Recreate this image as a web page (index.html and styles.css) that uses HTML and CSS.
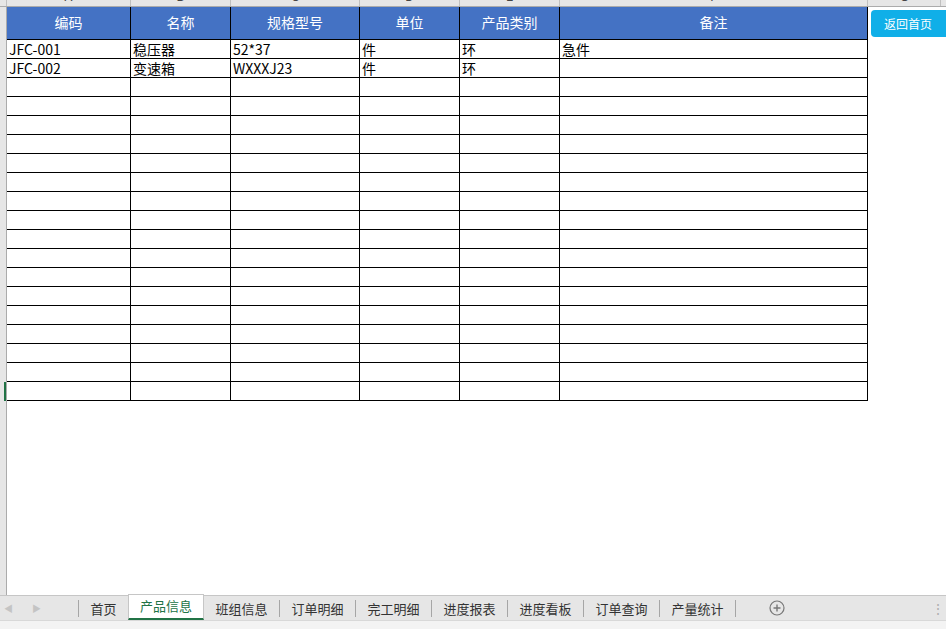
FILE: index.html
```html
<!DOCTYPE html>
<html lang="zh-CN">
<head>
    <meta charset="UTF-8">
    <title>产品信息</title>
    <link rel="stylesheet" href="styles.css">
</head>
<body>
    <div class="app">
        <!-- column letters, mostly scrolled out of view -->
        <div class="colhead">
            <div class="corner"></div>
            <div class="col w-a"><span>A</span></div>
            <div class="col w-b"><span>B</span></div>
            <div class="col w-c"><span>C</span></div>
            <div class="col w-d"><span>D</span></div>
            <div class="col w-e"><span>E</span></div>
            <div class="col w-f"><span>F</span></div>
            <div class="col w-g"><span>G</span></div>
        </div>

        <div class="main">
            <div class="rowhead"><div class="sel"></div></div>
            <div class="sheet">
                <div class="table" id="table">
                    <div class="row head">
                        <div class="cell w-a">编码</div>
                        <div class="cell w-b">名称</div>
                        <div class="cell w-c">规格型号</div>
                        <div class="cell w-d">单位</div>
                        <div class="cell w-e">产品类别</div>
                        <div class="cell w-f">备注</div>
                    </div>
                </div>
                <button class="home">返回首页</button>
            </div>
        </div>

        <div class="tabbar">
            <div class="nav">
                <span class="arrow">&#9664;</span>
                <span class="arrow">&#9654;</span>
            </div>
            <div class="tab first">首页</div>
            <div class="tab active">产品信息</div>
            <div class="tab">班组信息</div>
            <div class="tab">订单明细</div>
            <div class="tab">完工明细</div>
            <div class="tab">进度报表</div>
            <div class="tab">进度看板</div>
            <div class="tab">订单查询</div>
            <div class="tab">产量统计</div>
            <div class="add">
                <svg width="16" height="16" viewBox="0 0 16 16">
                    <circle cx="8" cy="8" r="7" fill="none" stroke="#777" stroke-width="1.2"/>
                    <path d="M8 4.5v7M4.5 8h7" stroke="#777" stroke-width="1.4"/>
                </svg>
            </div>
            <div class="dots">&#8942;</div>
        </div>
        <div class="status"></div>
    </div>

    <script>
        // product rows, the rest of the sheet is left blank
        var products = [
            ["JFC-001", "稳压器", "52*37", "件", "环", "急件"],
            ["JFC-002", "变速箱", "WXXXJ23", "件", "环", ""]
        ];
        var widths = ["w-a", "w-b", "w-c", "w-d", "w-e", "w-f"];
        var table = document.getElementById("table");

        for (var r = 0; r < 19; r++) {
            var row = document.createElement("div");
            row.className = "row";
            for (var c = 0; c < 6; c++) {
                var cell = document.createElement("div");
                cell.className = "cell " + widths[c];
                cell.textContent = products[r] ? products[r][c] : "";
                row.appendChild(cell);
            }
            table.appendChild(row);
        }
    </script>
</body>
</html>
```

FILE: styles.css
```css
* {
    margin: 0;
    padding: 0;
    box-sizing: border-box;
}

body {
    font-family: "Noto Sans CJK SC", "Liberation Sans", sans-serif;
    background: #fff;
    overflow: hidden;
}

.app {
    width: 946px;
    height: 629px;
    display: flex;
    flex-direction: column;
    overflow: hidden;
}

/* column widths shared by letters and cells */
.w-a { width: 124px; }
.w-b { width: 100px; }
.w-c { width: 129px; }
.w-d { width: 100px; }
.w-e { width: 100px; }
.w-f { width: 308px; }
.w-g { width: 73px; }

.colhead {
    display: flex;
    height: 7px;
    background: #e6e6e6;
    border-bottom: 1px solid #ababab;
    overflow: hidden;
    flex-shrink: 0;
}

.corner {
    width: 7px;
    border-right: 1px solid #c0c0c0;
}

.col {
    border-right: 1px solid #c0c0c0;
    text-align: center;
    font-size: 13px;
    color: #444;
    overflow: hidden;
}

.col span {
    display: block;
    line-height: 16px;
    margin-top: -12px;
}

.main {
    flex: 1;
    display: flex;
    overflow: hidden;
}

.rowhead {
    width: 7px;
    background: #e6e6e6;
    border-right: 1px solid #ababab;
    flex-shrink: 0;
}

.rowhead .sel {
    width: 2px;
    height: 19px;
    margin-left: 4px;
    margin-top: 375px;
    background: #217346;
}

.sheet {
    display: flex;
    align-items: flex-start;
}

.table {
    flex-shrink: 0;
}

.row {
    display: flex;
    height: 19px;
}

.cell {
    height: 100%;
    border-right: 1px solid #000;
    border-bottom: 1px solid #000;
    font-size: 14px;
    line-height: 19px;
    color: #000;
    padding-left: 2px;
    white-space: nowrap;
    overflow: hidden;
}

.row.head {
    height: 33px;
}

.row.head .cell {
    background: #4472c4;
    color: #fff;
    text-align: center;
    line-height: 31px;
    padding-left: 0;
}

.home {
    flex-shrink: 0;
    width: 80px;
    height: 27px;
    margin-top: 3px;
    margin-left: 3px;
    background: #10afe8;
    color: #fff;
    border: none;
    border-radius: 4px;
    font-family: inherit;
    font-size: 12px;
    padding-right: 6px;
}

.tabbar {
    height: 25px;
    flex-shrink: 0;
    display: flex;
    align-items: stretch;
    background: #e6e6e6;
    border-top: 1px solid #c6c6c6;
}

.nav {
    width: 79px;
    display: flex;
    align-items: center;
    gap: 19px;
    padding-left: 4px;
    border-right: 1px solid #a6a6a6;
    margin: 4px 0 3px;
}

.arrow {
    font-size: 9px;
    color: #c4c4c4;
}

.tab {
    width: 76px;
    font-size: 13px;
    color: #333;
    text-align: center;
    border-right: 1px solid #a6a6a6;
    margin: 4px 0 3px;
    line-height: 17px;
}

.tab.first {
    width: 49px;
    border-right: none;
}

.tab.active {
    margin: -2px 0 0;
    background: #fff;
    color: #217346;
    border: 1px solid #c6c6c6;
    border-bottom: 2px solid #217346;
    line-height: 22px;
}

.add {
    width: 82px;
    display: flex;
    align-items: center;
    justify-content: center;
}

.dots {
    margin-left: auto;
    width: 16px;
    font-size: 14px;
    color: #b0b0b0;
    line-height: 24px;
    text-align: center;
}

.status {
    height: 9px;
    flex-shrink: 0;
    background: #f3f3f3;
    border-top: 1px solid #d8d8d8;
}
```
